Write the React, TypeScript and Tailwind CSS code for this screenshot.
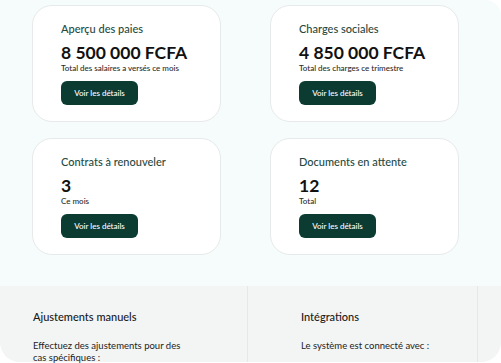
const cards = [
  { title: 'Aperçu des paies', value: '8 500 000 FCFA', note: 'Total des salaires a versés ce mois' },
  { title: 'Charges sociales', value: '4 850 000 FCFA', note: 'Total des charges ce trimestre' },
  { title: 'Contrats à renouveler', value: '3', note: 'Ce mois' },
  { title: 'Documents en attente', value: '12', note: 'Total' },
];

function StatCard({ title, value, note }: { title: string; value: string; note: string }) {
  return (
    <div className="h-[117px] rounded-[20px] border border-[#e7eaea] bg-white px-[28px] pt-[16px]">
      <div className="text-[11px] leading-[14px] font-medium text-[#1f4a3f]">{title}</div>
      <div className="mt-[6px] text-[17.5px] leading-[21px] font-bold text-[#111]">{value}</div>
      <div className="text-[8px] leading-[10px] font-medium text-[#2a2a2a]">{note}</div>
      <button className="mt-[8px] flex h-[24px] w-[77px] items-center justify-center rounded-[6px] bg-[#0c3b32] text-[8px] font-medium text-white">
        Voir les détails
      </button>
    </div>
  );
}

function App() {
  return (
    <div className="h-[363px] w-[501px] overflow-hidden bg-white font-['Lato','Noto_Sans',sans-serif]">
      {/* Cards */}
      <div className="rounded-tr-2xl bg-[#f6fcfb] pb-[31px] pl-[32px] pt-[5px]">
        <div className="grid grid-cols-[189px_189px] gap-x-[49px] gap-y-[16px]">
          {cards.map((c) => (
            <StatCard key={c.title} {...c} />
          ))}
        </div>
      </div>

      {/* Bottom panels */}
      <div className="flex h-[76px] rounded-b-[20px] bg-[#f3f4f4]">
        <div className="w-[248px] border-r border-[#e6e8e8] pl-[33px] pt-[24px]">
          <div className="text-[11px] leading-[14px] font-medium text-[#1a1a1a]">Ajustements manuels</div>
          <div className="mt-[16px] w-[154px] text-[9.5px] leading-[12px] text-[#222]">
            Effectuez des ajustements pour des cas spécifiques :
          </div>
        </div>
        <div className="w-[230px] border-r border-[#e6e8e8] pl-[53px] pt-[24px]">
          <div className="text-[11px] leading-[14px] font-medium text-[#1a1a1a]">Intégrations</div>
          <div className="mt-[16px] text-[9.5px] leading-[12px] text-[#222]">Le système est connecté avec :</div>
        </div>
        <div className="flex-1" />
      </div>
    </div>
  );
}

export default App;
